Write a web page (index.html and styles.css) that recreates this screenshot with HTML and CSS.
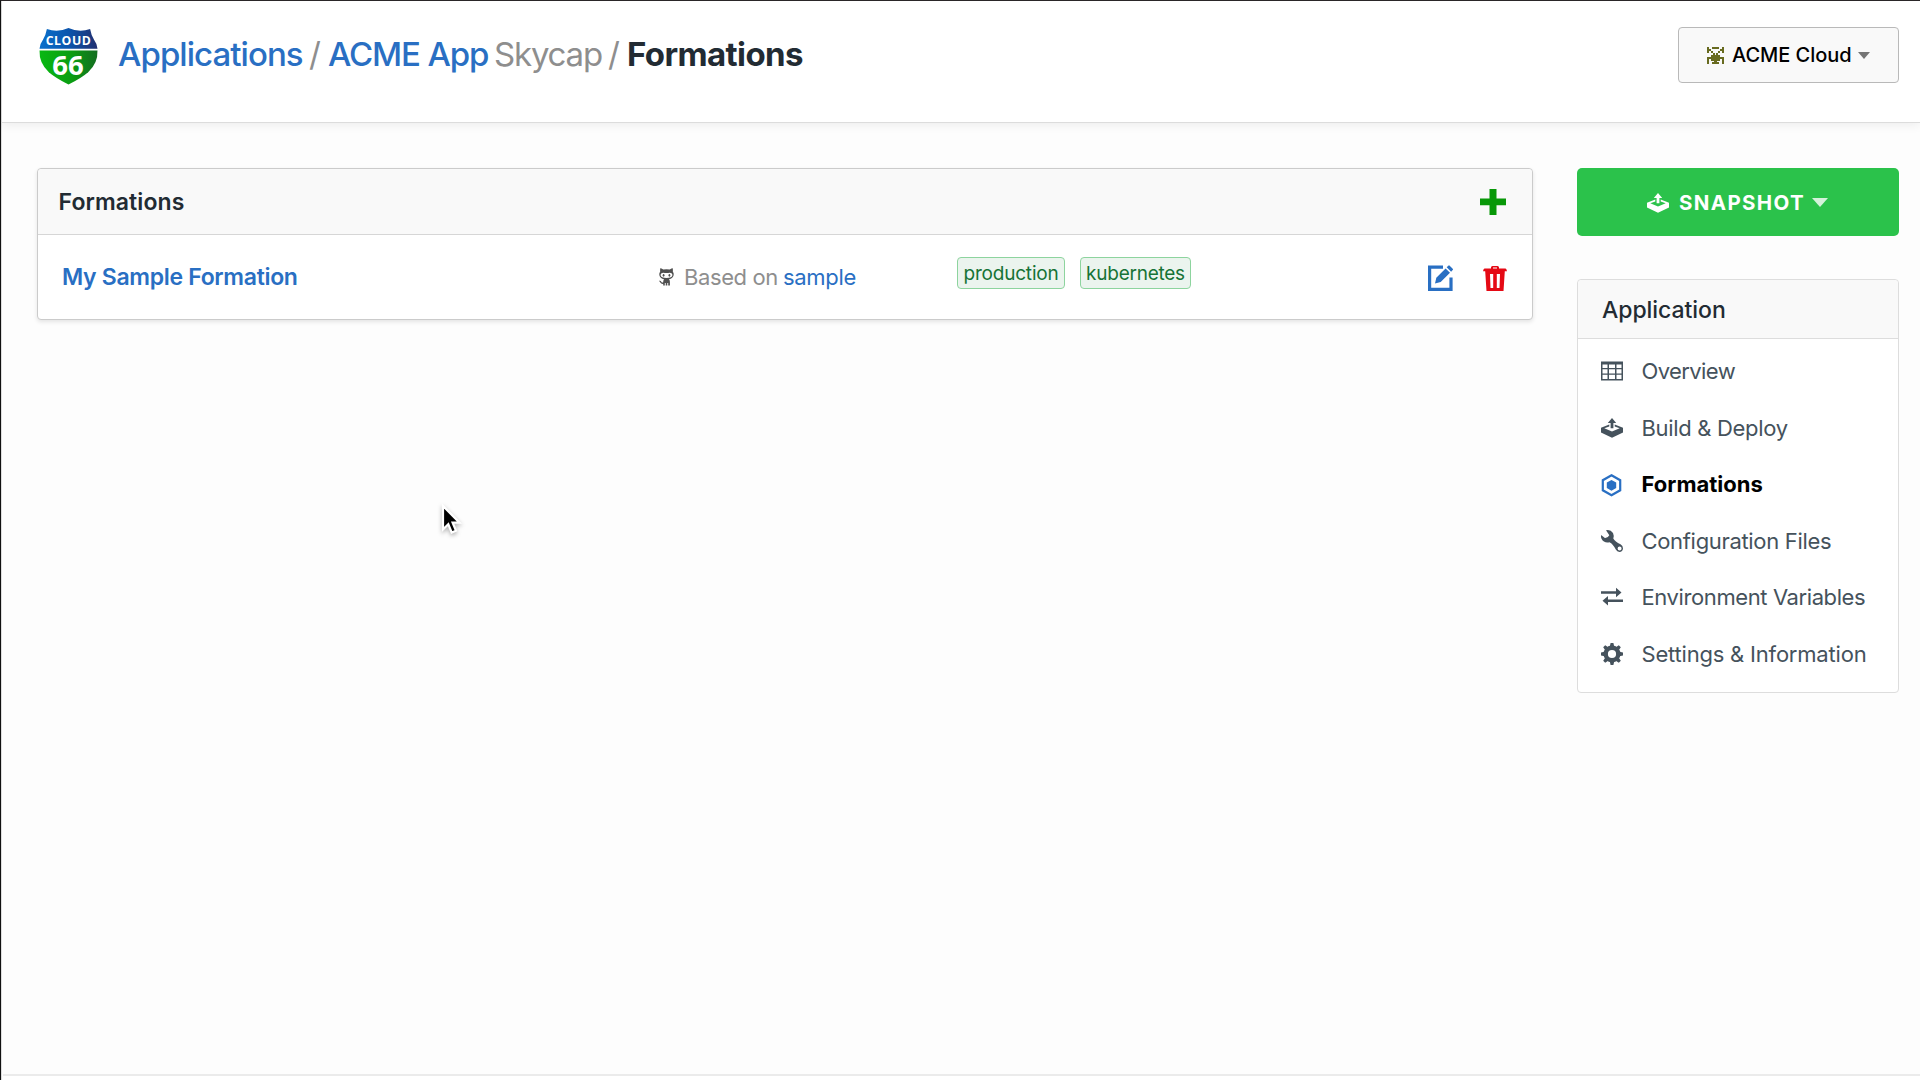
FILE: index.html
```html
<!DOCTYPE html>
<html lang="en">
<head>
<meta charset="utf-8">
<title>Formations</title>
<link rel="stylesheet" href="styles.css">
</head>
<body>
<svg class="defs" aria-hidden="true">
  <symbol id="deploy" viewBox="0 0 22 20">
    <path d="M11 0 15.2 5H12.4V10.2H9.6V5H6.8Z"/>
    <path d="M8.3 6.6 0 9.7V14.6L11 19.8 22 14.6V9.7L13.7 6.6V8.5L18.7 10.2 11 13.4 3.3 10.2 8.3 8.5Z"/>
  </symbol>
</svg>
<div class="frame">
<header class="topbar">
  <svg class="logo" viewBox="0 0 60 58">
    <defs>
      <linearGradient id="blue" x1="0" x2="1"><stop offset="0" stop-color="#0a70cc"/><stop offset=".5" stop-color="#0b55ad"/><stop offset="1" stop-color="#222f70"/></linearGradient>
      <linearGradient id="green" x1="0" x2="1"><stop offset="0" stop-color="#08b812"/><stop offset=".55" stop-color="#0a9d12"/><stop offset="1" stop-color="#146d20"/></linearGradient>
    </defs>
    <path fill="url(#blue)" d="M8 1Q19 5 30 0Q41 5 52 1Q53 7 56 12Q59 16 59.500 21H.5Q1 16 4 12Q7 7 8 1Z"/>
    <path fill="url(#green)" d="M.5 23H59.500Q60 36 50 45Q43 51 30 57.500Q17 51 10 45Q0 36 .5 23Z"/>
    <text class="logo-name" x="29.800" y="17.200" text-anchor="middle" textLength="46">CLOUD</text>
    <text class="logo-num" x="29.500" y="47.500" text-anchor="middle">66</text>
  </svg>
  <h1 class="crumbs">
    <a class="crumb-apps">Applications</a>
    <span class="slash">/</span>
    <a class="crumb-app">ACME App</a>
    <span class="crumb-env">Skycap</span>
    <span class="slash">/</span>
    <span class="crumb-page">Formations</span>
  </h1>
  <button class="account">
    <svg class="identicon" viewBox="0 0 17 17"><path d="M0 0h2v2h2v2H2v2H0zM15 0h2v6h-2V4h-2V2h2zM5 0h7v2H5zM4 4h2v2h2v2h1V6h2V4h2v2h-2v2h2v2h4v7h-2v-5h-2v2h-3v1h2v2H5v-2h2v-1H4v-2H2v5H0v-7h4V8h2V6H4z"/></svg>
    <span class="account-name">ACME Cloud</span>
    <i class="caret"></i>
  </button>
</header>
<main class="content">
  <section class="panel">
    <div class="panel-head">
      <h2 class="panel-title">Formations</h2>
      <svg class="add" viewBox="0 0 26 26"><path d="M9.500 0h7v9.500H26v6.800h-9.500V26h-7v-9.700H0V9.500h9.500z"/></svg>
    </div>
    <div class="formation">
      <a class="formation-name">My Sample Formation</a>
      <div class="base">
        <svg class="octocat" viewBox="0 0 15 18"><path fill-rule="evenodd" d="M1.500 0 4.300 1.500Q7.500.8 10.700 1.500L13.500 0Q14.200 2 13.800 3.400Q15 5 14.700 7Q14 10.600 10 11.200Q11 12.300 10.900 14V17.500H9.200V15H8.300V17.500H6.700V15H5.800V17.500H4.200V16Q2 16.200 1.100 14.300L0 12.800Q1.700 12.200 2.500 13.900Q3.200 14.800 4.200 14.300Q4.200 12 5 11.200Q1 10.600.3 7Q0 5 1.200 3.400Q.8 2 1.500 0ZM4.300 4.800Q1.500 4.800 1.600 7.300Q2 9.900 7.500 9.900Q13 9.900 13.400 7.300Q13.500 4.800 10.700 4.800Q7.500 5.200 4.300 4.800Z"/><ellipse cx="4.600" cy="7.300" rx=".9" ry="1.400"/><ellipse cx="10.400" cy="7.300" rx=".9" ry="1.400"/></svg>
        <span class="based">Based on</span>
        <a class="sample">sample</a>
      </div>
      <div class="tags"><span class="tag">production</span><span class="tag tag-wide">kubernetes</span></div>
      <div class="actions">
        <svg class="edit" viewBox="0 0 26 26"><path d="M15 2.200H1.600V24.400H23V12.500" fill="none" stroke="currentColor" stroke-width="3.200"/><path d="M7 18.500 8.300 12.700 17.600 3.400 22 7.800 12.700 17ZM18.700 2.300 20.300.7Q21 0 21.700.7L24.700 3.700Q25.400 4.400 24.700 5.100L23.100 6.700Z"/></svg>
        <svg class="trash" viewBox="0 0 24 25"><path fill-rule="evenodd" d="M8 2.500V1.500Q8 0 9.500 0H14.500Q16 0 16 1.500V2.500H22.500Q23.500 2.500 24 5.300H21.800L20.500 25H3.500L2.200 5.300H0Q.5 2.500 1.500 2.500ZM10 2.500H14V1.500H10ZM7 8 7.500 22H10.200V8ZM13.800 8V22H16.500L17 8Z"/></svg>
      </div>
    </div>
  </section>
  <aside class="side">
    <button class="snapshot">
      <svg class="snap-icon"><use href="#deploy"/></svg>
      <span class="snap-text">SNAPSHOT</span>
      <i class="caret caret-light"></i>
    </button>
    <nav class="menu">
      <h2 class="menu-title">Application</h2>
      <ul class="items">
        <li><svg class="ico" viewBox="0 0 22 22"><path fill-rule="evenodd" d="M0 1.500H22V20.500H0ZM1.500 4.500V8H6.500V4.500ZM8 4.500V8H14V4.500ZM15.500 4.500V8H20.500V4.500ZM1.500 9.300V13.500H6.500V9.300ZM8 9.300V13.500H14V9.300ZM15.500 9.300V13.500H20.500V9.300ZM1.500 14.800V19H6.500V14.800ZM8 14.800V19H14V14.800ZM15.500 14.800V19H20.500V14.800Z"/></svg><a class="overview">Overview</a></li>
        <li><svg class="ico deploy-ico"><use href="#deploy"/></svg><a>Build &amp; Deploy</a></li>
        <li class="active"><svg class="ico hex" viewBox="0 0 22 22"><path d="M10.500 1.200 19.200 6.200V16.300L10.500 21.300 1.800 16.300V6.200Z" fill="none" stroke="currentColor" stroke-width="2.200"/><path d="M10.500 5.900 15.200 8.600V14L10.500 16.700 5.800 14V8.600Z"/></svg><a>Formations</a></li>
        <li><svg class="ico" viewBox="0 0 22 22"><path fill-rule="evenodd" d="M5 .3Q9.500-.8 12 3Q13.300 5.800 12.300 8.500Q14 11.500 19.500 14.300Q22 15.700 22 18.400Q21.600 21.600 18.500 21.900Q16 21.800 14.800 19.600Q12 14 8.500 12.300Q3 13.500.5 8.800Q-.3 7 .1 5L3.900 8Q6.800 8.200 8.300 5.200ZM18.600 16.500A2 2 0 1 0 18.600 20.500A2 2 0 1 0 18.600 16.500Z"/></svg><a>Configuration Files</a></li>
        <li><svg class="ico swap" viewBox="0 0 22 22"><path d="M0 4.300H15V.8L20.500 5.500 15 10.200V6.700H0ZM22 12.500H7V9L1.500 13.700 7 18.500V15H22Z"/></svg><a class="env-link">Environment Variables</a></li>
        <li><svg class="ico" viewBox="0 0 22 22"><path d="M8.800 3.500 9.600 0H12.400L13.200 3.500ZM8.800 18.500 9.600 22H12.400L13.200 18.500ZM3.500 8.800 0 9.600V12.400L3.500 13.200ZM18.500 8.800 22 9.600V12.400L18.500 13.200ZM4.200 7.200 2.200 4.200 4.200 2.200 7.200 4.200ZM14.800 17.800 17.800 19.800 19.800 17.800 17.800 14.800ZM14.800 4.200 17.800 2.200 19.800 4.200 17.800 7.200ZM4.200 14.800 2.200 17.800 4.200 19.800 7.200 17.800Z"/><circle cx="11" cy="11" r="6.300" fill="none" stroke="currentColor" stroke-width="4.400"/></svg><a class="settings">Settings &amp; Information</a></li>
      </ul>
    </nav>
  </aside>
</main>
<footer class="foot"></footer>
</div>
<svg class="cursor" viewBox="0 0 22 34"><path d="M2 2V25.500L7.300 20.300 10.700 28.500 15 26.700 11.600 18.600H18.500Z" fill="#000" stroke="#fff" stroke-width="2.200"/></svg>
</body>
</html>
```
FILE: styles.css
```css
* { box-sizing: border-box; }
body { margin: 0; background: #fdfdfd; font-family: Inter, "Liberation Sans", sans-serif; color: #222b33; }
h1, h2, ul { margin: 0; padding: 0; font-weight: inherit; }
ul { list-style: none; }
button { font: inherit; margin: 0; padding: 0; }
svg { display: block; fill: currentColor; flex: none; overflow: visible; }
.defs { position: absolute; width: 0; height: 0; }
a { color: #296fc3; white-space: nowrap; }

.frame { height: 1080px; border-left: 1px solid #111; border-top: 1px solid #2a2628; box-shadow: inset 1px 0 #ddd; display: flex; flex-direction: column; overflow: hidden; }
.topbar { height: 122px; flex: none; display: flex; align-items: flex-start; background: #fff; border-bottom: 1px solid #dcdcdc; box-shadow: 0 2px 10px rgba(0,0,0,.07); padding: 25px 21px 0 38px; margin-left: 1px; }
.logo { width: 59px; height: 57px; margin-top: 2px; margin-left: -1px; }
.logo-name { font: 700 12.500px "Open Sans", sans-serif; fill: #fff; }
.logo-num { font: 700 28px "Open Sans", sans-serif; fill: #fff; }
.crumbs { display: flex; font-size: 33px; line-height: 40px; margin: 8px auto 0 20px; white-space: nowrap; }
.crumbs > * { flex: none; }
.crumb-apps { width: 191px; font-weight: 500; letter-spacing: -.95px; }
.slash { width: 19px; color: #8e8e8e; font-weight: 400; }
.crumb-app { width: 166px; font-weight: 500; letter-spacing: -1.150px; }
.crumb-env { width: 114px; color: #8e8e8e; letter-spacing: -1.200px; }
.crumb-page { font-weight: 700; letter-spacing: -.6px; }
.account { width: 221px; height: 56px; margin-top: 1px; border: 1px solid #b9b9b9; border-radius: 4px; background: #f9f9f9; display: flex; align-items: center; padding-left: 28px; color: #000; }
.identicon { width: 17px; height: 17px; color: #686b20; margin-right: 8px; }
.account-name { font-size: 20px; font-weight: 500; white-space: nowrap; letter-spacing: -.03px; }
.caret { border: 6.500px solid transparent; border-top: 7px solid #757575; border-bottom: 0; margin-left: 6px; }

.content { flex: 1; display: flex; align-items: flex-start; gap: 44px; padding: 45px 21px 0 36px; }
.panel { width: 1496px; height: 152px; border: 1px solid #cbcbcb; border-radius: 4px; background: #fff; box-shadow: 0 2px 4px rgba(0,0,0,.1); }
.panel-head { height: 66px; background: #f9f9f9; border-bottom: 1px solid #d6d6d6; border-radius: 4px 4px 0 0; padding: 0 26px 0 20.500px; display: flex; align-items: center; justify-content: space-between; }
.panel-title { font-size: 23px; font-weight: 600; letter-spacing: .1px; padding-top: 1px; }
.add { width: 26px; height: 26px; color: #089808; }
.formation { height: 84px; display: grid; grid-template-columns: 597px 298px 1fr auto; align-items: center; padding: 0 25.500px 0 24px; }
.formation-name { font-size: 23px; font-weight: 600; letter-spacing: -.32px; }
.base { display: flex; align-items: center; font-size: 22px; }
.octocat { width: 15px; height: 18px; color: #505050; margin-right: 10px; }
.based { color: #8e8e8e; width: 99px; white-space: nowrap; letter-spacing: -.4px; }
.sample { letter-spacing: -.3px; }
.tags { display: flex; gap: 15px; margin-top: -8px; }
.tag { width: 108px; height: 32px; border: 1px solid #8dd49e; border-radius: 4px; background: #ebf4ee; color: #167336; font-size: 19px; line-height: 31px; letter-spacing: -.2px; text-align: center; }
.tag-wide { width: 111px; letter-spacing: -.25px; }
.actions { display: flex; align-items: center; gap: 29px; margin-top: 2px; }
.edit { width: 26px; height: 26px; color: #296fc3; }
.trash { width: 24px; height: 25px; color: #e50914; }

.side { width: 322px; }
.snapshot { width: 322px; height: 68px; border: 0; border-radius: 5px; background: #2bc24b; color: #fff; display: flex; align-items: center; padding: 1px 0 0 70px; }
.snap-icon { width: 22px; height: 20px; margin-right: 10px; }
.snap-text { font-size: 20.500px; font-weight: 700; letter-spacing: 1.350px; }
.caret-light { border-width: 8px; border-top: 9px solid #d5f2db; border-bottom: 0; margin-left: 7px; }
.menu { margin-top: 43px; height: 414px; border: 1px solid #ddd; border-radius: 4px; background: #fff; }
.menu-title { height: 59px; background: #f9f9f9; border-bottom: 1px solid #ddd; border-radius: 4px 4px 0 0; padding-left: 24px; font-size: 23px; font-weight: 500; line-height: 60px; letter-spacing: -.05px; }
.items { padding-top: 4px; }
.items li { height: 56.500px; display: flex; align-items: center; padding-left: 23px; gap: 18.500px; }
.items a { font-size: 22px; color: #45525c; letter-spacing: -.32px; }
.items .overview { letter-spacing: -.6px; }
.items .env-link { letter-spacing: -.4px; }
.items .settings { letter-spacing: -.2px; }
.items .active a { color: #000; font-weight: 700; letter-spacing: 0; }
.ico { width: 22px; height: 22px; color: #45525c; }
.deploy-ico { height: 20px; }
.hex { color: #296fc3; margin-top: 2px; }
.swap { margin-top: 2px; }
.foot { height: 6px; border-top: 2px solid #ebebeb; background: #fff; margin-left: 2px; flex: none; }
.cursor { position: absolute; left: 441px; top: 504px; width: 22px; height: 34px; filter: drop-shadow(0 2px 2px rgba(0,0,0,.3)); }
```
